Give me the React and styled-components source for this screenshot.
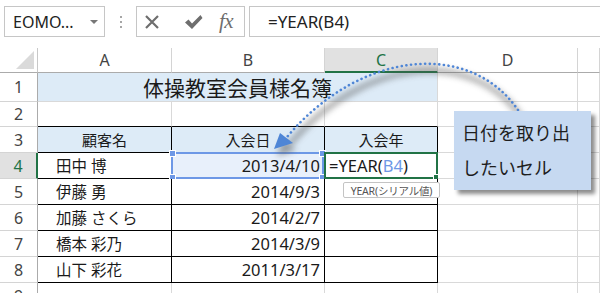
import React from "react";
import styled, { createGlobalStyle } from "styled-components";

const Global = createGlobalStyle`
  html, body { margin: 0; padding: 0; background: #fff; }
  body { font-family: "Noto Sans", "Noto Sans CJK JP", sans-serif; color: #222; }
`;

const Page = styled.div`
  position: relative;
  width: 600px;
  height: 293px;
  overflow: hidden;
  background: #fff;
`;

const Toolbar = styled.div`
  display: flex;
  align-items: flex-start;
  height: 48px;
  box-sizing: border-box;
  padding: 6px 0 0 4px;
`;

const NameBox = styled.div`
  box-sizing: border-box;
  width: 101px;
  height: 31px;
  border: 1px solid #c6c6c6;
  display: flex;
  align-items: center;
  justify-content: space-between;
  padding: 0 6px 0 8px;
  font-size: 16px;
  color: #222;
`;

const DropArrow = styled.span`
  width: 0;
  height: 0;
  border-left: 4px solid transparent;
  border-right: 4px solid transparent;
  border-top: 4px solid #777;
`;

const Grip = styled.div`
  width: 31px;
  height: 31px;
  display: flex;
  flex-direction: column;
  align-items: center;
  justify-content: center;
  gap: 3px;
`;

const GripDot = styled.span`
  width: 2px;
  height: 2px;
  background: #a6a6a6;
`;

const FuncBox = styled.div`
  box-sizing: border-box;
  width: 109px;
  height: 31px;
  border: 1px solid #c6c6c6;
  display: flex;
  align-items: center;
  padding-left: 7px;
`;

const FuncIcon = styled.span`
  display: flex;
  align-items: center;
  justify-content: center;
  margin-left: ${(p) => p.$ml || 0}px;
  color: #6e6e6e;
`;

const Fx = styled.span`
  font-family: "Liberation Serif", "DejaVu Serif", serif;
  font-style: italic;
  font-size: 21px;
  color: #6e6e6e;
  letter-spacing: -0.5px;
  line-height: 1;
`;

const FormulaBox = styled.div`
  box-sizing: border-box;
  flex: 1;
  height: 31px;
  margin-left: 4px;
  border: 1px solid #c6c6c6;
  border-right: none;
  display: flex;
  align-items: center;
  padding-left: 18px;
  font-size: 17px;
  color: #222;
`;

const Sheet = styled.div`
  display: grid;
  grid-template-columns: 38px 134px 153px 113px 140px 1fr;
  grid-template-rows: 25px 29px 25px 26px 26px 26px 26px 26px 26px 26px;
`;

const Corner = styled.div`
  box-sizing: border-box;
  border-right: 1px solid #c8c8c8;
  border-bottom: 1px solid #ababab;
  position: relative;
  &::after {
    content: "";
    position: absolute;
    right: 3px;
    bottom: 3px;
    width: 0;
    height: 0;
    border-left: 18px solid transparent;
    border-bottom: 18px solid #dadada;
  }
`;

const ColHead = styled.div`
  box-sizing: border-box;
  display: flex;
  align-items: center;
  justify-content: center;
  font-size: 16px;
  border-right: 1px solid #d4d4d4;
  border-bottom: ${(p) => (p.$active ? "2px solid #217346" : "1px solid #ababab")};
  background: ${(p) => (p.$active ? "#e1e1e1" : "#fff")};
  color: ${(p) => (p.$active ? "#217346" : "#444")};
`;

const RowHead = styled.div`
  box-sizing: border-box;
  display: flex;
  align-items: center;
  justify-content: center;
  font-size: 16px;
  border-bottom: 1px solid #d4d4d4;
  border-right: ${(p) => (p.$active ? "2px solid #217346" : "1px solid #ababab")};
  background: ${(p) => (p.$active ? "#e1e1e1" : "#fff")};
  color: ${(p) => (p.$active ? "#217346" : "#444")};
`;

const Cell = styled.div`
  box-sizing: border-box;
  position: relative;
  display: flex;
  align-items: center;
  white-space: nowrap;
  grid-column: span ${(p) => p.$span || 1};
  justify-content: ${(p) => p.$align || "flex-start"};
  padding: 0 ${(p) => p.$pr || 0}px 0 ${(p) => p.$pl || 0}px;
  font-size: ${(p) => p.$fs || 16.5}px;
  background: ${(p) => p.$bg || "#fff"};
  border-right: 1px solid ${(p) => p.$br || "#d9d9d9"};
  border-bottom: 1px solid ${(p) => p.$bb || "#d9d9d9"};
  color: #1a1a1a;
`;

const SelFrame = styled.div`
  position: absolute;
  top: -1px;
  left: -1px;
  right: ${(p) => (p.$kind === "green" ? -1 : 0)}px;
  bottom: -1px;
  border: 2px solid ${(p) => (p.$kind === "green" ? "#217346" : "#6d98e6")};
  pointer-events: none;
`;

const Handle = styled.span`
  position: absolute;
  width: 5px;
  height: 5px;
  background: ${(p) => (p.$kind === "green" ? "#217346" : "#6d98e6")};
  border: 1px solid #fff;
  ${(p) => (p.$v === "t" ? "top: -4px;" : "bottom: -4px;")}
  ${(p) => (p.$h === "l" ? "left: -4px;" : "right: -4px;")}
`;

const Ref = styled.span`
  color: #6d98e6;
`;

const Callout = styled.div`
  position: absolute;
  left: 454px;
  top: 111px;
  width: 137px;
  height: 79px;
  box-sizing: border-box;
  padding: 4px 8px;
  background: #c6d9f1;
  box-shadow: 4px 4px 4px rgba(0, 0, 0, 0.45);
  font-family: "Noto Sans CJK JP", sans-serif;
  font-size: 18px;
  line-height: 35px;
  color: #1e1e1e;
`;

const Tip = styled.div`
  position: absolute;
  left: 343px;
  top: 182px;
  width: 97px;
  height: 16px;
  box-sizing: border-box;
  border: 1px solid #c4c4c4;
  border-radius: 2px;
  background: #fff;
  display: flex;
  align-items: center;
  justify-content: center;
  font-family: "Noto Sans", "Noto Sans CJK JP", sans-serif;
  font-size: 10.5px;
  letter-spacing: -0.2px;
  color: #555;
  white-space: nowrap;
`;

const Overlay = styled.svg`
  position: absolute;
  left: 0;
  top: 0;
  pointer-events: none;
`;

const people = [
  ["田中 博", "2013/4/10"],
  ["伊藤 勇", "2014/9/3"],
  ["加藤 さくら", "2014/2/7"],
  ["橋本 彩乃", "2014/3/9"],
  ["山下 彩花", "2011/3/17"],
];

const BLUE_BG = "#ddebf7";
const K = "#000";
const ARC = "M 518 110 C 470 40, 360 50, 287 137";

export default function App() {
  return (
    <Page>
      <Global />
      <Toolbar>
        <NameBox>
          <span>EOMO...</span>
          <DropArrow />
        </NameBox>
        <Grip>
          <GripDot />
          <GripDot />
          <GripDot />
        </Grip>
        <FuncBox>
          <FuncIcon>
            <svg width="16" height="16" viewBox="0 0 16 16">
              <path d="M2 2 L14 14 M14 2 L2 14" stroke="#6e6e6e" strokeWidth="2.2" fill="none" />
            </svg>
          </FuncIcon>
          <FuncIcon $ml={24}>
            <svg width="19" height="16" viewBox="0 0 19 16">
              <path d="M1 8.5 L4.5 5.5 L8 9.5 L16.5 1 L18.5 4 L8 15 Z" fill="#6e6e6e" />
            </svg>
          </FuncIcon>
          <FuncIcon $ml={16}>
            <Fx>fx</Fx>
          </FuncIcon>
        </FuncBox>
        <FormulaBox>=YEAR(B4)</FormulaBox>
      </Toolbar>

      <Sheet>
        <Corner />
        <ColHead>A</ColHead>
        <ColHead>B</ColHead>
        <ColHead $active>C</ColHead>
        <ColHead>D</ColHead>
        <ColHead />

        <RowHead>1</RowHead>
        <Cell $span={3} $bg={BLUE_BG} $align="center" $fs={21}>
          体操教室会員様名簿
        </Cell>
        <Cell />
        <Cell />

        <RowHead>2</RowHead>
        <Cell $bb={K} />
        <Cell $bb={K} />
        <Cell $bb={K} />
        <Cell />
        <Cell />

        <RowHead>3</RowHead>
        <Cell $bg={BLUE_BG} $br={K} $bb={K} $align="center" $fs={15}>顧客名</Cell>
        <Cell $bg={BLUE_BG} $br={K} $bb={K} $align="center" $fs={15}>入会日</Cell>
        <Cell $bg={BLUE_BG} $br={K} $bb={K} $align="center" $fs={15}>入会年</Cell>
        <Cell />
        <Cell />

        {people.map(([name, date], i) => (
          <React.Fragment key={name}>
            <RowHead $active={i === 0}>{i + 4}</RowHead>
            <Cell $br={K} $bb={K} $pl={18} $fs={15.5}>{name}</Cell>
            <Cell $br={K} $bb={K} $align="flex-end" $pr={4} $bg={i === 0 ? "#e8f0fb" : "#fff"}>
              {date}
              {i === 0 && (
                <SelFrame $kind="blue">
                  <Handle $v="t" $h="l" />
                  <Handle $v="t" $h="r" />
                  <Handle $v="b" $h="l" />
                  <Handle $v="b" $h="r" />
                </SelFrame>
              )}
            </Cell>
            <Cell $br={K} $bb={K} $pl={4}>
              {i === 0 && (
                <>
                  =YEAR(<Ref>B4</Ref>)
                  <SelFrame $kind="green">
                    <Handle $kind="green" $v="b" $h="r" />
                  </SelFrame>
                </>
              )}
            </Cell>
            <Cell />
            <Cell />
          </React.Fragment>
        ))}

        <RowHead>9</RowHead>
        <Cell />
        <Cell />
        <Cell />
        <Cell />
        <Cell />
      </Sheet>

      <Tip>YEAR(シリアル値)</Tip>

      <Overlay width="600" height="293" viewBox="0 0 600 293">
        <defs>
          <filter id="arcShadow" x="-20%" y="-20%" width="140%" height="140%">
            <feGaussianBlur stdDeviation="3" />
          </filter>
        </defs>
        <g filter="url(#arcShadow)" opacity="0.55" transform="translate(3 7)">
          <path d={ARC} stroke="#555" strokeWidth="5" fill="none" />
          <polygon points="274,149 280,133 293,143" fill="#555" />
        </g>
        <path
          d={ARC}
          stroke="#4f86d6"
          strokeWidth="2.6"
          strokeDasharray="0.1 4.6"
          strokeLinecap="round"
          fill="none"
        />
        <polygon points="274,149 280,133 293,143" fill="#4f86d6" />
      </Overlay>

      <Callout>
        日付を取り出
        <br />
        したいセル
      </Callout>
    </Page>
  );
}
